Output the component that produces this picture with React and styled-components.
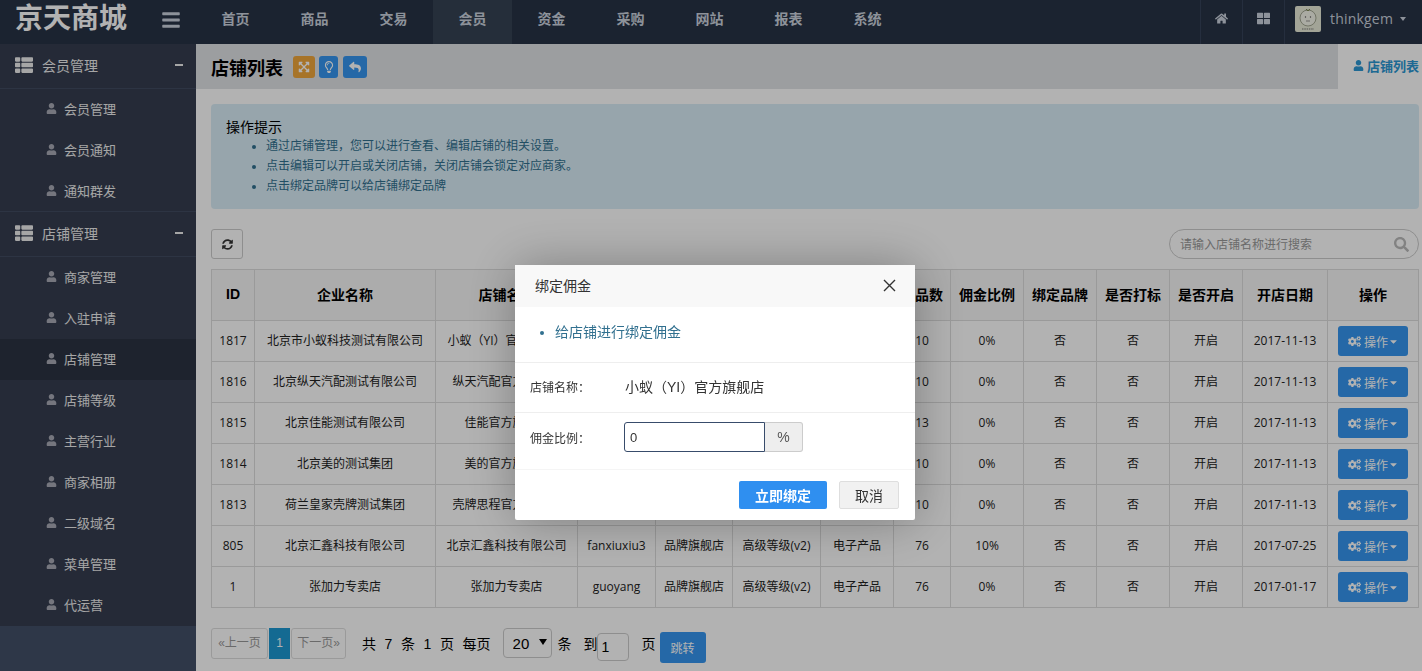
import React from 'react';
import styled, { createGlobalStyle } from 'styled-components';
import {
  FaBars, FaHome, FaThLarge, FaThList, FaUser, FaCogs, FaSyncAlt, FaSearch,
  FaExpandArrowsAlt, FaRegLightbulb, FaReply, FaCaretDown,
} from 'react-icons/fa';

const GlobalStyle = createGlobalStyle`
  html, body, #root { margin: 0; height: 100%; }
  body {
    font-family: "Liberation Sans", "Noto Sans CJK SC", sans-serif;
    font-size: 12px;
    color: #333;
    background: #fff;
    overflow: hidden;
  }
  * { box-sizing: border-box; }
`;

const Page = styled.div`
  height: 671px;
  display: flex;
  flex-direction: column;
`;

const TopBar = styled.header`
  height: 44px;
  flex-shrink: 0;
  display: flex;
  background: #273346;
  color: #cbd2dd;
`;

const Logo = styled.div`
  width: 148px;
  padding-left: 15px;
  font-size: 28px;
  font-weight: bold;
  line-height: 37px;
  color: #fff;
  white-space: nowrap;
`;

const MenuToggle = styled.div`
  width: 48px;
  display: flex;
  align-items: center;
  padding-left: 13px;
  font-size: 20px;
  padding-bottom: 4px;
`;

const Nav = styled.nav`
  display: flex;
  flex: 1;
`;

const NavItem = styled.div`
  width: 79px;
  text-align: center;
  line-height: 38px;
  font-size: 14px;
  font-weight: bold;
  background: ${props => (props.$active ? '#354254' : 'transparent')};
`;

const TopTool = styled.div`
  width: 42px;
  display: flex;
  align-items: center;
  justify-content: center;
  padding-bottom: 8px;
  font-size: 13px;
  border-left: 1px solid #36425a;
`;

const UserBox = styled.div`
  width: 138px;
  display: flex;
  align-items: flex-start;
  padding: 6px 0 0 10px;
  border-left: 1px solid #36425a;
  font-size: 14px;
`;

const Avatar = styled.svg`
  width: 26px;
  height: 26px;
  border-radius: 2px;
  flex-shrink: 0;
`;

const UserName = styled.span`
  margin-left: 9px;
  line-height: 25px;
  font-family: "Open Sans", sans-serif;
  font-size: 14px;
  letter-spacing: 0.2px;
`;

const UserCaret = styled.span`
  width: 0;
  height: 0;
  margin: 11px 0 0 7px;
  border-left: 3.5px solid transparent;
  border-right: 3.5px solid transparent;
  border-top: 4px solid #cbd2dd;
`;

const Body = styled.div`
  flex: 1;
  display: flex;
  min-height: 0;
`;

const Sidebar = styled.aside`
  width: 196px;
  flex-shrink: 0;
  background: #435067;
`;

const MenuGroup = styled.div`
  background: #353d50;
  color: #eee;
  &:not(:last-child) > div:last-child {
    box-shadow: inset 0 -1px 0 #414b60;
  }
`;

const GroupHead = styled.div`
  height: 45px;
  display: flex;
  align-items: center;
  padding: 0 13px 3px 15px;
  border-bottom: 1px solid #414b60;
  font-size: 14px;
  svg { font-size: 18px; margin-right: 9px; }
`;

const Minus = styled.span`
  width: 8px;
  height: 2px;
  margin-left: auto;
  background: #eee;
`;

const MenuItem = styled.div`
  height: 41px;
  display: flex;
  align-items: center;
  padding: 0 0 2px 46px;
  font-size: 13px;
  background: ${props => (props.$active ? '#2b3342' : 'transparent')};
  svg { width: 11px; height: 11px; color: #a8aab5; margin-right: 7px; }
`;

const Main = styled.main`
  flex: 1;
  min-width: 0;
  display: flex;
  flex-direction: column;
`;

const TitleBar = styled.div`
  height: 45px;
  flex-shrink: 0;
  display: flex;
  align-items: center;
  padding-left: 15px;
  background: #e0e2e6;
`;

const PageTitle = styled.h1`
  margin: 0 10px 0 0;
  font-size: 18px;
  font-weight: bold;
  color: #000;
`;

const TitleButton = styled.button`
  width: ${props => props.$w || 19}px;
  height: 22px;
  margin-right: ${props => props.$gap || 4}px;
  padding: 0;
  border: 0;
  border-radius: 3px;
  display: flex;
  align-items: center;
  justify-content: center;
  background: ${props => props.$bg || '#3596f0'};
  color: #fff;
  font-size: 12px;
`;

const ActiveTab = styled.div`
  width: 84px;
  height: 45px;
  margin-left: auto;
  display: flex;
  align-items: center;
  padding: 0 0 2px 15px;
  background: #fff;
  color: #2c97d3;
  font-size: 13px;
  font-weight: bold;
  white-space: nowrap;
  svg { width: 11px; height: 11px; margin-right: 3px; flex-shrink: 0; }
`;

const Content = styled.div`
  flex: 1;
  padding: 15px 3px 0 15px;
`;

const Notice = styled.div`
  height: 105px;
  padding: 15px;
  border-radius: 4px;
  background: #d9edf7;
  color: #31708f;
`;

const NoticeTitle = styled.div`
  font-size: 14px;
  line-height: 17px;
  color: #000;
`;

const NoticeList = styled.ul`
  margin: 0;
  padding-left: 40px;
  li { line-height: 20px; font-size: 12px; }
`;

const Toolbar = styled.div`
  height: 30px;
  margin: 20px 0 10px;
  display: flex;
  justify-content: space-between;
`;

const RefreshButton = styled.button`
  width: 32px;
  height: 30px;
  border: 1px solid #ccc;
  border-radius: 3px;
  background: #fff;
  color: #333;
  font-size: 11px;
  padding: 2px 0 0;
`;

const SearchBox = styled.div`
  position: relative;
  width: 250px;
  height: 30px;
  svg {
    position: absolute;
    right: 10px;
    top: 8px;
    font-size: 15px;
    color: #bbb;
  }
`;

const SearchInput = styled.input`
  width: 100%;
  height: 100%;
  padding: 1px 30px 0 10px;
  border: 1px solid #ccc;
  border-radius: 15px;
  outline: 0;
  font: inherit;
  font-size: 12px;
  &::placeholder { color: #999; opacity: 1; }
`;

const Table = styled.table`
  width: 1208px;
  table-layout: fixed;
  border-collapse: collapse;
  th, td {
    border: 1px solid #ddd;
    text-align: center;
    white-space: nowrap;
    overflow: hidden;
  }
  th {
    height: 51px;
    padding: 0 0 2px;
    font-size: 14px;
    font-weight: bold;
    color: #000;
    background: #f7f7f7;
  }
  td {
    height: 41px;
    padding: 0 0 2px;
    font-family: "Open Sans", "Noto Sans CJK SC", sans-serif;
    font-size: 12px;
    color: #222;
  }
  td:last-child { padding: 0; }
`;

const ActionButton = styled.button`
  width: 70px;
  height: 30px;
  padding: 0 0 0 1px;
  border: 0;
  border-radius: 3px;
  background: #3596f0;
  color: #fff;
  font-family: "Liberation Sans", "Noto Sans CJK SC", sans-serif;
  font-size: 12px;
  display: inline-flex;
  align-items: center;
  justify-content: center;
  vertical-align: middle;
  svg:first-child { font-size: 13px; margin-right: 3px; }
  svg:last-child { font-size: 11px; }
`;

const Pager = styled.div`
  margin-top: 20px;
  display: flex;
  align-items: flex-start;
  font-size: 14px;
  color: #000;
`;

const PageLink = styled.span`
  width: ${props => props.$w}px;
  height: 31px;
  line-height: 28px;
  margin-right: 1px;
  text-align: center;
  font-size: 12px;
  border: 1px solid ${props => (props.$current ? '#1e98d1' : '#ddd')};
  border-radius: ${props => (props.$current ? 0 : 3)}px;
  background: ${props => (props.$current ? '#1e98d1' : '#fff')};
  color: ${props => (props.$current ? '#fff' : '#999')};
  white-space: nowrap;
`;

const PagerInfo = styled.div`
  display: flex;
  gap: 8.6px;
  margin: 0 12px 0 15px;
  line-height: 33px;
`;

const SelectWrap = styled.div`
  position: relative;
  width: 49px;
  height: 30px;
  &::after {
    content: '';
    position: absolute;
    right: 5px;
    top: 11px;
    border-left: 4px solid transparent;
    border-right: 4px solid transparent;
    border-top: 6px solid #000;
    pointer-events: none;
  }
`;

const PageSize = styled.select`
  width: 100%;
  height: 100%;
  padding: 0 0 0 9px;
  appearance: none;
  border: 1px solid #ccc;
  border-radius: 4px;
  background: #fff;
  color: #000;
  font: inherit;
  font-size: 15px;
`;

const PagerWord = styled.span`
  line-height: 33px;
  margin-left: ${props => props.$ml || 0}px;
`;

const JumpInput = styled.input`
  width: 32px;
  height: 28px;
  margin: 5px 0 0 -1px;
  padding: 0 4px;
  border: 1px solid #ccc;
  border-radius: 4px;
  outline: 0;
  color: #000;
  font: inherit;
  font-size: 14px;
`;

const JumpButton = styled.button`
  width: 46px;
  height: 31px;
  margin: 4px 0 0 4px;
  padding: 0;
  border: 0;
  border-radius: 3px;
  background: #3596f0;
  color: #fff;
  font: inherit;
  font-size: 12px;
`;

const Backdrop = styled.div`
  position: fixed;
  inset: 0;
  background: rgba(0, 0, 0, 0.3);
`;

const Modal = styled.div`
  position: fixed;
  left: 515px;
  top: 265px;
  width: 400px;
  height: 255px;
  display: flex;
  flex-direction: column;
  border-radius: 2px;
  background: #fff;
  box-shadow: 1px 1px 50px rgba(0, 0, 0, 0.3);
`;

const ModalHead = styled.div`
  height: 42px;
  flex-shrink: 0;
  display: flex;
  align-items: center;
  justify-content: space-between;
  padding: 0 19px 2px 20px;
  background: #f8f8f8;
  color: #333;
  font-size: 14px;
`;

const ModalTip = styled.ul`
  height: 56px;
  margin: 0;
  padding: 15px 0 0 40px;
  border-bottom: 1px solid #eee;
  color: #31708f;
  font-size: 14px;
  line-height: 20px;
`;

const ModalRow = styled.div`
  height: ${props => props.$h}px;
  display: flex;
  align-items: center;
  padding: 0 0 ${props => props.$pb}px 15px;
  border-bottom: 1px solid ${props => props.$line || '#eee'};
`;

const RowLabel = styled.span`
  width: 94px;
  flex-shrink: 0;
  font-size: 12px;
  color: #333;
`;

const RowValue = styled.span`
  margin-left: 1px;
  font-size: 14px;
  color: #333;
`;

const RateInput = styled.input`
  width: 141px;
  height: 30px;
  padding: 0 5px;
  border: 1px solid #384c6b;
  border-radius: 3px 0 0 3px;
  outline: 0;
  font: inherit;
  font-size: 13px;
  color: #333;
`;

const RateUnit = styled.span`
  width: 38px;
  height: 30px;
  line-height: 28px;
  text-align: center;
  border: 1px solid #ccc;
  border-left: 0;
  border-radius: 0 3px 3px 0;
  background: #eee;
  font-size: 14px;
  color: #555;
`;

const ModalFoot = styled.div`
  flex: 1;
  display: flex;
  justify-content: flex-end;
  gap: 12px;
  padding: 11px 16px 0 0;
`;

const PrimaryButton = styled.button`
  width: 88px;
  height: 28px;
  padding: 0;
  border: 0;
  border-radius: 2px;
  background: #2f8ff0;
  color: #fff;
  font: inherit;
  font-size: 14px;
  font-weight: bold;
`;

const CancelButton = styled.button`
  width: 60px;
  height: 28px;
  padding: 0;
  border: 1px solid #dedede;
  border-radius: 2px;
  background: #f1f1f1;
  color: #333;
  font: inherit;
  font-size: 14px;
`;

const navItems = ['首页', '商品', '交易', '会员', '资金', '采购', '网站', '报表', '系统'];

const menu = [
  { title: '会员管理', items: ['会员管理', '会员通知', '通知群发'] },
  {
    title: '店铺管理',
    items: ['商家管理', '入驻申请', '店铺管理', '店铺等级', '主营行业', '商家相册', '二级域名', '菜单管理', '代运营'],
  },
];

const colWidths = [43, 181, 142, 78, 77, 88, 73, 57, 73, 73, 73, 73, 85, 91];

const headers = ['ID', '企业名称', '店铺名称', '店主账号', '店铺类型', '店铺等级', '主营行业', '商品数', '佣金比例', '绑定品牌', '是否打标', '是否开启', '开店日期', '操作'];

const rows = [
  ['1817', '北京市小蚁科技测试有限公司', '小蚁（YI）官方旗舰店', 'xiaoyi', '10', '0%', '2017-11-13'],
  ['1816', '北京纵天汽配测试有限公司', '纵天汽配官方旗舰店', 'zongtian', '10', '0%', '2017-11-13'],
  ['1815', '北京佳能测试有限公司', '佳能官方旗舰店', 'jianeng', '13', '0%', '2017-11-13'],
  ['1814', '北京美的测试集团', '美的官方旗舰店', 'meidi', '10', '0%', '2017-11-13'],
  ['1813', '荷兰皇家壳牌测试集团', '壳牌思程官方旗舰店', 'qiaopai', '10', '0%', '2017-11-13'],
  ['805', '北京汇鑫科技有限公司', '北京汇鑫科技有限公司', 'fanxiuxiu3', '76', '10%', '2017-07-25'],
  ['1', '张加力专卖店', '张加力专卖店', 'guoyang', '76', '0%', '2017-01-17'],
];

const AvatarImage = () => (
  <Avatar viewBox="0 0 26 26">
    <rect width="26" height="26" fill="#e8ebd8" />
    <circle cx="13" cy="12" r="8" fill="#f4f5ea" stroke="#8d927c" strokeWidth="0.8" />
    <path d="M11 3l2 2 2-2" fill="none" stroke="#7f8a55" strokeWidth="1" />
    <circle cx="10.5" cy="11" r="0.7" fill="#555" />
    <circle cx="15.5" cy="11" r="0.7" fill="#555" />
    <path d="M11 15h4" stroke="#555" strokeWidth="0.6" />
    <path d="M7 23h12" stroke="#777" strokeWidth="1.2" strokeDasharray="1.5 .8" />
  </Avatar>
);

export default function App() {
  return (
    <>
      <GlobalStyle />
      <Page>
        <TopBar>
          <Logo>京天商城</Logo>
          <MenuToggle><FaBars /></MenuToggle>
          <Nav>
            {navItems.map(name => (
              <NavItem key={name} $active={name === '会员'}>{name}</NavItem>
            ))}
          </Nav>
          <TopTool><FaHome /></TopTool>
          <TopTool><FaThLarge /></TopTool>
          <UserBox>
            <AvatarImage />
            <UserName>thinkgem</UserName>
            <UserCaret />
          </UserBox>
        </TopBar>
        <Body>
          <Sidebar>
            {menu.map(group => (
              <MenuGroup key={group.title}>
                <GroupHead>
                  <FaThList />
                  {group.title}
                  <Minus />
                </GroupHead>
                {group.items.map(item => (
                  <MenuItem key={item} $active={group.title === '店铺管理' && item === '店铺管理'}>
                    <FaUser />
                    {item}
                  </MenuItem>
                ))}
              </MenuGroup>
            ))}
          </Sidebar>
          <Main>
            <TitleBar>
              <PageTitle>店铺列表</PageTitle>
              <TitleButton $w={22} $bg="#f0a63c"><FaExpandArrowsAlt /></TitleButton>
              <TitleButton $gap={5}><FaRegLightbulb /></TitleButton>
              <TitleButton $w={24}><FaReply /></TitleButton>
              <ActiveTab><FaUser />店铺列表</ActiveTab>
            </TitleBar>
            <Content>
              <Notice>
                <NoticeTitle>操作提示</NoticeTitle>
                <NoticeList>
                  <li>通过店铺管理，您可以进行查看、编辑店铺的相关设置。</li>
                  <li>点击编辑可以开启或关闭店铺，关闭店铺会锁定对应商家。</li>
                  <li>点击绑定品牌可以给店铺绑定品牌</li>
                </NoticeList>
              </Notice>
              <Toolbar>
                <RefreshButton><FaSyncAlt /></RefreshButton>
                <SearchBox>
                  <SearchInput placeholder="请输入店铺名称进行搜索" />
                  <FaSearch />
                </SearchBox>
              </Toolbar>
              <Table>
                <colgroup>
                  {colWidths.map((w, i) => <col key={i} width={w} />)}
                </colgroup>
                <thead>
                  <tr>{headers.map(h => <th key={h}>{h}</th>)}</tr>
                </thead>
                <tbody>
                  {rows.map(row => (
                    <tr key={row[0]}>
                      <td>{row[0]}</td>
                      <td>{row[1]}</td>
                      <td>{row[2]}</td>
                      <td>{row[3]}</td>
                      <td>品牌旗舰店</td>
                      <td>高级等级(v2)</td>
                      <td>电子产品</td>
                      <td>{row[4]}</td>
                      <td>{row[5]}</td>
                      <td>否</td>
                      <td>否</td>
                      <td>开启</td>
                      <td>{row[6]}</td>
                      <td><ActionButton><FaCogs />操作<FaCaretDown /></ActionButton></td>
                    </tr>
                  ))}
                </tbody>
              </Table>
              <Pager>
                <PageLink $w={57}>«上一页</PageLink>
                <PageLink $w={21} $current>1</PageLink>
                <PageLink $w={55}>下一页»</PageLink>
                <PagerInfo>
                  <span>共</span><span>7</span><span>条</span><span>1</span><span>页</span><span>每页</span>
                </PagerInfo>
                <SelectWrap>
                  <PageSize defaultValue="20"><option>20</option><option>50</option></PageSize>
                </SelectWrap>
                <PagerWord $ml={6}>条</PagerWord>
                <PagerWord $ml={12}>到</PagerWord>
                <JumpInput defaultValue="1" />
                <PagerWord $ml={13}>页</PagerWord>
                <JumpButton>跳转</JumpButton>
              </Pager>
            </Content>
          </Main>
        </Body>
      </Page>
      <Backdrop />
      <Modal>
        <ModalHead>
          绑定佣金
          <svg width="13" height="13" viewBox="0 0 13 13">
            <path d="M1 1l11 11M12 1L1 12" stroke="#333" strokeWidth="1.4" fill="none" />
          </svg>
        </ModalHead>
        <ModalTip><li>给店铺进行绑定佣金</li></ModalTip>
        <ModalRow $h={50} $pb={3}>
          <RowLabel>店铺名称：</RowLabel>
          <RowValue>小蚁（YI）官方旗舰店</RowValue>
        </ModalRow>
        <ModalRow $h={57} $pb={8} $line="#f5f5f5">
          <RowLabel>佣金比例：</RowLabel>
          <RateInput defaultValue="0" />
          <RateUnit>%</RateUnit>
        </ModalRow>
        <ModalFoot>
          <PrimaryButton>立即绑定</PrimaryButton>
          <CancelButton>取消</CancelButton>
        </ModalFoot>
      </Modal>
    </>
  );
}
